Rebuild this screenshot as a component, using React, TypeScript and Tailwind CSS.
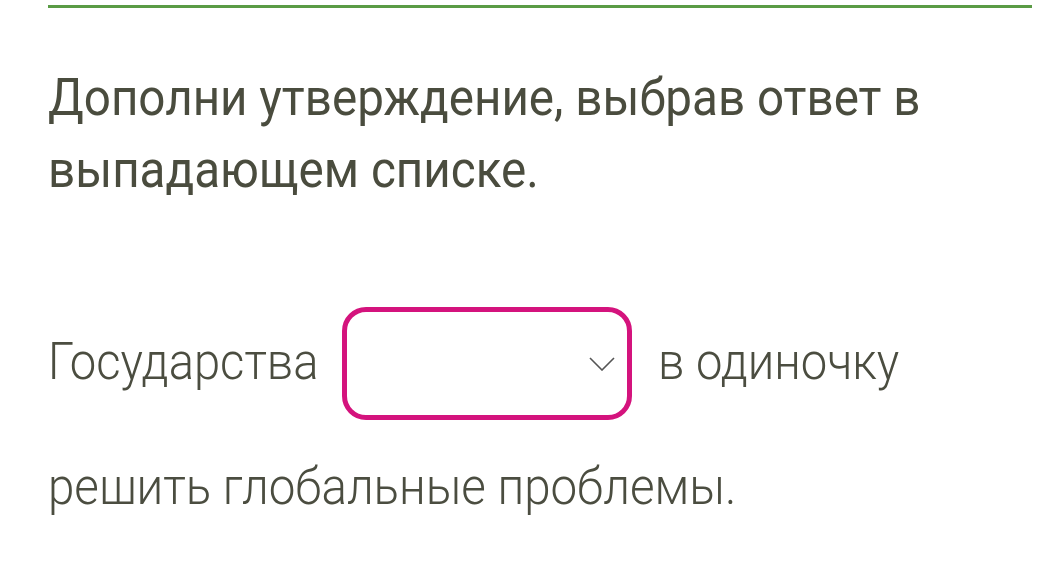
export default function App() {
  return (
    <div className="min-h-[582px] w-[1049px] overflow-hidden bg-white px-[48px] pt-[5px] text-[#4b4d40]" style={{ fontFamily: "Roboto, 'Liberation Sans', sans-serif" }}>
      <div className="h-[3px] w-[984px] bg-[#5a9b45]" />
      <h2 className="mt-[54px] w-[1075px] origin-left scale-x-[0.915] text-[52px] font-normal leading-[72px] text-[#4a4c3e]">
        Дополни утверждение, выбрав ответ в выпадающем списке.
      </h2>
      <div className="mt-[101px] flex items-center text-[52px] font-light leading-[60px]">
        <span className="-mr-[30px] -mt-[4px] inline-block origin-left scale-x-[0.907]">Государства</span>
        <div className="mx-[26px] flex h-[113px] w-[290px] items-center justify-end rounded-[24px] border-[5px] border-[#d4137d] pr-[12px]">
          <svg width="26" height="14" viewBox="0 0 26 14" fill="none">
            <path d="M1 1l12 12L25 1" stroke="#555" strokeWidth="1.6" />
          </svg>
        </div>
        <span className="-mt-[4px] inline-block origin-left scale-x-[0.907]">в одиночку</span>
      </div>
      <p className="mt-[37px] w-[1075px] origin-left scale-x-[0.913] text-[52px] font-light leading-[60px]">решить глобальные проблемы.</p>
    </div>
  );
}
